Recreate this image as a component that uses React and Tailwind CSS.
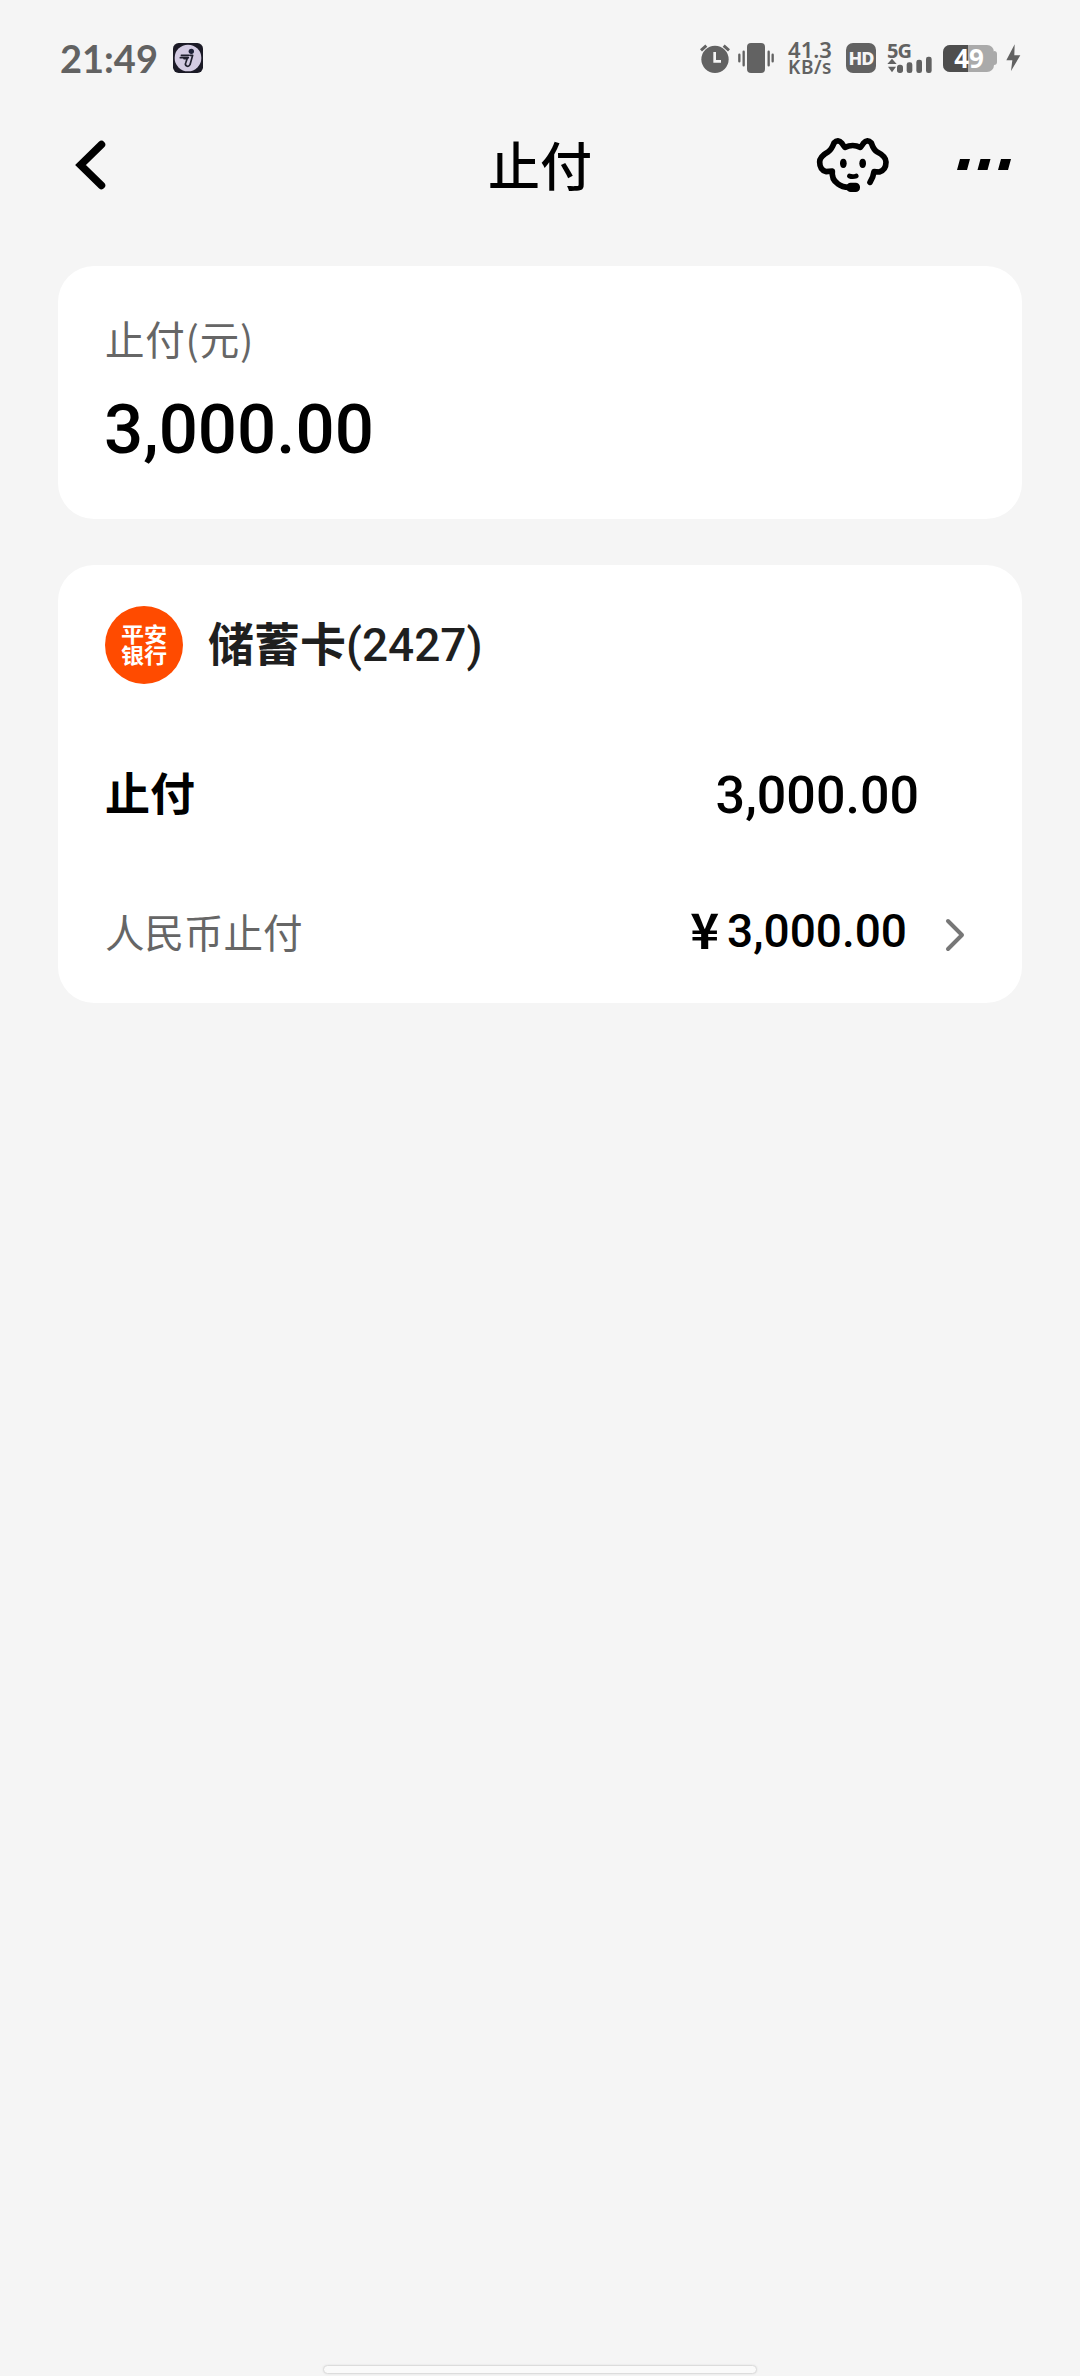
import React from "react";

const ink = "#626262";

function AppBadge() {
  return (
    <svg className="ml-[16px] h-[30px] w-[30px]" viewBox="399 69 90 90">
      <rect x="399" y="69" width="90" height="90" rx="17" fill="#1b1a26" />
      <circle cx="444" cy="114" r="40" fill="#d3cbe2" />
      <circle cx="454" cy="94" r="8" fill="#1d2036" />
      <path d="M424 106h22M421 113h24M450 106h8l-8 28q-4 7-10 4t-3-9l5-14-10 1" fill="none" stroke="#20202e" strokeWidth="5" strokeLinecap="round" strokeLinejoin="round" />
    </svg>
  );
}

function AlarmIcon() {
  return (
    <svg className="h-[32px] w-[32px]" viewBox="54 66 96 96">
      <circle cx="102" cy="118" r="41" fill={ink} />
      <path d="M60 91l16-14M144 91l-16-14" stroke={ink} strokeWidth="9" />
      <path d="M101 96v28h19" fill="none" stroke="#f5f5f5" strokeWidth="8" />
    </svg>
  );
}

function VibrateIcon() {
  return (
    <svg className="ml-[6px] h-[30px] w-[38px]" viewBox="171 69 114 90">
      <rect x="201" y="69" width="54" height="90" rx="12" fill={ink} />
      <path d="M191 95v41M178 104v20M266 95v41M278 104v20" stroke={ink} strokeWidth="7" strokeLinecap="round" />
    </svg>
  );
}

function SignalIcon() {
  return (
    <div className="relative ml-[11px] h-[32px] w-[46px]">
      <span className="absolute top-[-1px] left-0 font-['Noto_Sans'] text-[20px] leading-[20px] font-bold tracking-[-1px]">5G</span>
      <svg className="absolute inset-0 h-[32px] w-[46px]" viewBox="621 66 138 96">
        <path d="M622 132l14-16 14 16zM624 140h24l-12 17z" fill={ink} />
        <rect x="651" y="134" width="18" height="25" rx="8" fill={ink} />
        <rect x="680" y="127" width="17" height="32" rx="7" fill={ink} />
        <rect x="709" y="119" width="17" height="40" rx="7" fill={ink} />
        <rect x="738" y="110" width="17" height="49" rx="7" fill={ink} />
      </svg>
    </div>
  );
}

function Battery() {
  return (
    <div className="relative ml-[10px] flex h-[27px] w-[54px]">
      <div className="flex h-[27px] w-[51px] overflow-hidden rounded-[7px] bg-[#aaaaaa]">
        <div className="w-[25px] bg-[#4e4e4e]" />
      </div>
      <div className="my-auto h-[14px] w-[3px] rounded-r-[3px] bg-[#aaaaaa]" />
      <span className="absolute inset-0 pr-[2px] text-center font-['Noto_Sans'] text-[26px] leading-[27px] font-bold text-white">49</span>
    </div>
  );
}

function StatusBar() {
  return (
    <div className="flex h-[116px] items-center pr-[59px] pl-[60px] text-[#626262]">
      <span className="w-[97px] font-['Lato'] text-[38px] leading-none font-bold whitespace-nowrap">21:49</span>
      <AppBadge />
      <div className="ml-auto flex items-center">
        <AlarmIcon />
        <VibrateIcon />
        <div className="ml-[13px] w-[44px] text-center font-['Noto_Sans'] font-semibold">
          <div className="text-[22px] leading-[19px]">41.3</div>
          <div className="text-[19px] leading-[17px] tracking-[0.5px]">KB/s</div>
        </div>
        <div className="ml-[14px] flex h-[30px] w-[30px] items-center justify-center rounded-[7px] bg-[#626262] font-['Noto_Sans'] text-[18px] leading-none font-extrabold tracking-[-1px] text-[#f5f5f5]">
          HD
        </div>
        <SignalIcon />
        <Battery />
        <svg className="ml-[9px] h-[28px] w-[15px]" viewBox="976 76 45 84">
          <path d="M1002 77l-25 48h18l-4 32 28-47h-18z" fill={ink} />
        </svg>
      </div>
    </div>
  );
}

function DogIcon() {
  return (
    <svg className="h-[60px] w-[80px]" viewBox="96 72 240 180" fill="none" stroke="#000" strokeLinecap="round" strokeLinejoin="round">
      <path
        d="M192 112q23-11 46 0 6-7 9-12 12-14 24-1 7 21 18 27 26 13 26 30 0 24-20 30l-16-1q-2 17-12 32M192 112q-6-7-9-12-12-14-24-1-7 19-17 26-26 14-26 31 0 23 19 29l19-2q-3 25 16 38 14 11 34 11"
        strokeWidth="17"
      />
      <path d="M205 198q10 4 21 0" strokeWidth="14" />
      <ellipse cx="187" cy="160" rx="10" ry="14" fill="#000" stroke="none" />
      <ellipse cx="245" cy="160" rx="10" ry="14" fill="#000" stroke="none" />
      <rect x="196" y="218" width="41" height="28" rx="13" fill="#000" stroke="none" />
    </svg>
  );
}

function Header() {
  return (
    <div className="grid h-[100px] grid-cols-[1fr_auto_1fr] items-center">
      <svg className="mb-[2px] ml-[70px] h-[60px] w-[40px]" viewBox="0 0 40 60" fill="none" stroke="#000" strokeWidth="7.5" strokeLinecap="round">
        <path d="M31.500 9.500L10.500 30L31.500 50.500" />
      </svg>
      <h1 className="mt-[6px] text-[52px] leading-[60px] font-medium text-black">止付</h1>
      <div className="mb-[4px] flex items-center justify-end pr-[67px]">
        <DogIcon />
        <svg className="ml-[64px] h-[11px] w-[56px]" viewBox="0 0 56 11">
          <path d="M3 0h10l-3 11h-10zM23.500 0h10l-3 11h-10zM44 0h10l-3 11h-10z" fill="#000" />
        </svg>
      </div>
    </div>
  );
}

function App() {
  return (
    <div className="flex h-[2376px] w-[1080px] flex-col overflow-hidden bg-[#f5f5f5] font-['Roboto','Noto_Sans_CJK_SC',sans-serif]">
      <StatusBar />
      <Header />
      <main className="mt-[50px] flex flex-col gap-[46px] px-[58px]">
        <section className="h-[253px] rounded-[36px] bg-white px-[47px] pt-[48px]">
          <div className="font-['Noto_Sans_CJK_SC',sans-serif] text-[39.500px] leading-[48px] tracking-[0.8px] text-[#666666]">止付(元)</div>
          <div className="mt-[28px] ml-[-1px] text-[69px] leading-[80px] font-medium text-black">3,000.00</div>
        </section>
        <section className="h-[438px] rounded-[36px] bg-white pr-[54px] pl-[47px]">
          <div className="flex items-center pt-[41px]">
            <div className="flex h-[78px] w-[78px] flex-col items-center justify-center rounded-full bg-[#ff4b00] pt-[2px] text-[21px] leading-[21px] font-bold text-white">
              <span className="scale-x-110">平安</span>
              <span className="scale-x-110">银行</span>
            </div>
            <div className="ml-[25px] text-[46px] leading-[56px] text-[#1f1f1f]">
              <span className="font-bold">储蓄卡</span>
              <span className="font-medium">(2427)</span>
            </div>
          </div>
          <div className="mt-[79px] flex h-[66px] items-center justify-between pr-[49px] text-black">
            <span className="text-[45px] font-bold">止付</span>
            <span className="text-[52px] font-medium">3,000.00</span>
          </div>
          <div className="mt-[73px] flex h-[60px] items-center">
            <span className="mt-[5px] text-[39.500px] text-[#666666]">人民币止付</span>
            <span className="mb-[8px] ml-auto font-['Noto_Sans_CJK_SC'] text-[49px] leading-[60px] font-bold text-black">¥</span>
            <span className="mb-[2px] ml-[8px] text-[46px] leading-[60px] font-medium text-black">3,000.00</span>
            <svg className="mt-[5px] mr-px ml-[36px] h-[36px] w-[24px]" viewBox="0 0 24 36" fill="none" stroke="#777777" strokeWidth="4" strokeLinecap="round" strokeLinejoin="round">
              <path d="M5 4L19 18L5 32" />
            </svg>
          </div>
        </section>
      </main>
      <div className="mx-auto mt-auto mb-[2px] h-[9px] w-[434px] rounded-full border border-[#dcdcdc] bg-[#fafafa] shadow-[0_0_2px_#dddddd]" />
    </div>
  );
}

export default App;
